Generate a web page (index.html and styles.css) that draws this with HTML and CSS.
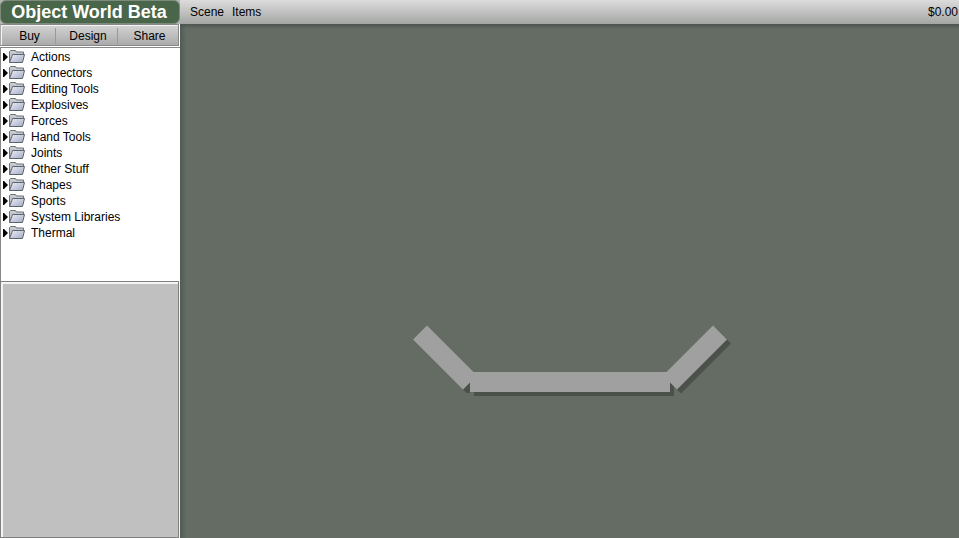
FILE: index.html
```html
<!DOCTYPE html>
<html lang="en">
<head>
<meta charset="utf-8">
<title>Object World Beta</title>
<link rel="stylesheet" href="styles.css">
</head>
<body>
<svg class="defs" aria-hidden="true">
  <defs>
    <linearGradient id="folder-fill" x1="0" y1="0" x2="1" y2="1">
      <stop offset="0" stop-color="#eceef8"/>
      <stop offset="1" stop-color="#a4aac4"/>
    </linearGradient>
    <symbol id="folder" viewBox="0 0 22 16">
      <path d="M0 4V12H1L5 8L1 4Z" fill="#000"/>
      <path d="M6.500 13.500V2.500L7.500 1.500H12.500L13.500 3H20.500V5.500" fill="#c3cad0" stroke="#69747b"/>
      <path d="M6.500 13.500L9.500 5.500H21.500L19.500 13.500Z" fill="url(#folder-fill)" stroke="#59646b"/>
    </symbol>
  </defs>
</svg>
<div class="app">
  <aside class="sidebar">
    <div class="brand"><h1 class="title">Object World Beta</h1></div>
    <nav class="tabs">
      <button class="tab" type="button">Buy</button>
      <button class="tab" type="button">Design</button>
      <button class="tab" type="button">Share</button>
    </nav>
    <ul class="tree">
      <li class="row"><svg class="icon"><use href="#folder"/></svg>Actions</li>
      <li class="row"><svg class="icon"><use href="#folder"/></svg>Connectors</li>
      <li class="row"><svg class="icon"><use href="#folder"/></svg>Editing Tools</li>
      <li class="row"><svg class="icon"><use href="#folder"/></svg>Explosives</li>
      <li class="row"><svg class="icon"><use href="#folder"/></svg>Forces</li>
      <li class="row"><svg class="icon"><use href="#folder"/></svg>Hand Tools</li>
      <li class="row"><svg class="icon"><use href="#folder"/></svg>Joints</li>
      <li class="row"><svg class="icon"><use href="#folder"/></svg>Other Stuff</li>
      <li class="row"><svg class="icon"><use href="#folder"/></svg>Shapes</li>
      <li class="row"><svg class="icon"><use href="#folder"/></svg>Sports</li>
      <li class="row"><svg class="icon"><use href="#folder"/></svg>System Libraries</li>
      <li class="row"><svg class="icon"><use href="#folder"/></svg>Thermal</li>
    </ul>
    <div class="details"></div>
  </aside>
  <main class="world">
    <header class="menubar">
      <button class="menu" type="button">Scene</button>
      <button class="menu" type="button">Items</button>
      <span class="balance">$0.00</span>
    </header>
    <div class="scene">
      <svg class="ramp" viewBox="0 0 318 72" role="img" aria-label="Ramp made of three beams">
        <g fill="#4c504b">
          <path d="M50 64.500L54 68H57V57Z"/>
          <path d="M61 51H261V71H61Z"/>
          <path d="M304 4.500L318 18.500L268 68.500L254 54.500Z"/>
        </g>
        <path d="M14 .5L64 50.500L50 64.500L0 14.500Z" fill="#a0a0a0"/>
        <path d="M57 47H257V67H57Z" fill="#a0a0a0"/>
        <path d="M300 .5L314 14.500L264 64.500L257 57.500V47H253.500Z" fill="#a0a0a0"/>
      </svg>
    </div>
  </main>
</div>
</body>
</html>
```
FILE: styles.css
```css
* { box-sizing: border-box; }

body {
  margin: 0;
  font: 12px/16px "Liberation Sans", Arial, sans-serif;
  color: #000;
  background: #646c64;
}

button {
  border: 0;
  padding: 0;
  background: none;
  font: inherit;
  color: inherit;
}

.defs { position: absolute; width: 0; height: 0; }

.app {
  display: grid;
  grid-template-columns: 180px 1fr;
  height: 100vh;
}

.sidebar {
  display: flex;
  flex-direction: column;
  background: #fff;
}

.brand { background: #b4b6b4; height: 24px; }

.title {
  margin: 0;
  height: 24px;
  padding-right: 2px;
  border: 1px solid #7d8b7d;
  border-radius: 6px;
  background: #4a664a;
  color: #fff;
  font-size: 18px;
  line-height: 22px;
  text-align: center;
  white-space: nowrap;
}

.tabs {
  display: grid;
  grid-template-columns: 54px 62px 1fr;
  height: 22px;
  margin-right: 1px;
  border: 1px solid #888;
  border-left-color: #aaa;
  box-shadow: inset 1px 1px #f4f4f4;
  background: linear-gradient(#d4d4d4, #aaa);
}

.tab { margin: 3px 0 2px; padding-left: 3px; }
.tab + .tab { border-left: 1px solid #999; }

.tree {
  list-style: none;
  margin: 1px 0 0;
  padding: 1px 0 0 2px;
  height: 234px;
  border-top: 1px solid #888;
  border-left: 1px solid #888;
}

.row { display: flex; gap: 6px; height: 16px; }
.icon { width: 22px; height: 16px; flex: none; }

.details {
  flex: 1;
  border: 1px solid #808080;
  box-shadow: inset 1px 1px #f4f4f4, inset 2px 2px #f4f4f4, 1px 0 #f4f4f4;
  margin-right: 1px;
  background: #c0c0c0;
}

.world {
  display: flex;
  flex-direction: column;
  min-width: 0;
}

.menubar {
  display: flex;
  align-items: center;
  gap: 8px;
  height: 24px;
  padding: 0 1px 0 10px;
  background: linear-gradient(#dcdcdc, #a4a6a4);
}

.balance { margin-left: auto; }

.scene {
  flex: 1;
  display: grid;
  place-content: center;
  padding: 159px 0 0 5px;
  background:
    linear-gradient(#4c554f, transparent 5px),
    linear-gradient(90deg, #4c5c54, transparent 6px),
    #646c64;
}

.ramp { width: 318px; height: 72px; }
```
